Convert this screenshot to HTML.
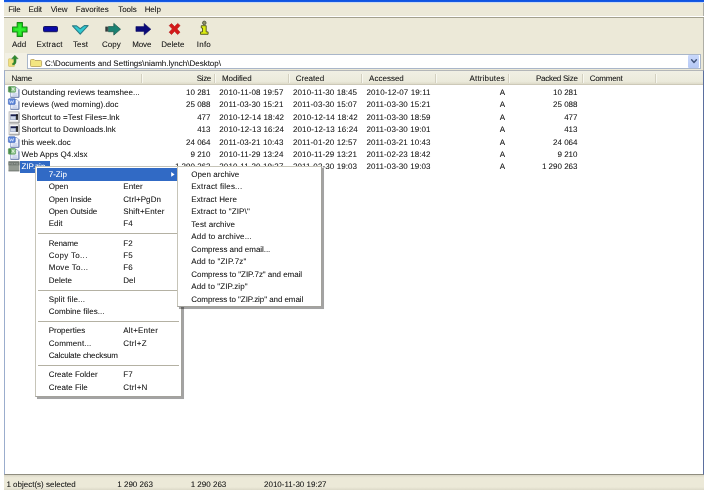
<!DOCTYPE html>
<html><head><meta charset="utf-8"><title>7-Zip File Manager</title>
<style>
html,body{margin:0;padding:0;background:#fff;}
body{width:708px;height:490px;overflow:hidden;position:relative;font-family:"Liberation Sans",Arial,sans-serif;font-size:8px;color:#1a1a1a;text-rendering:geometricPrecision;text-shadow:0 0 0.4px rgba(0,0,0,0.28);}
.abs{position:absolute;}
#win{position:absolute;left:4.3px;top:0;width:699.5px;height:490px;background:#ece9d8;overflow:hidden;}
#layer{position:absolute;left:0;top:0;width:708px;height:490px;will-change:transform;}
#title{left:0;top:0;width:100%;height:3.4px;background:linear-gradient(#0b50e2,#165ae2 50%,#3a74e6 62%,#c9d8f3 82%,#ece9d8);}
#menubar{left:0;top:3.2px;width:100%;height:14px;line-height:14px;white-space:nowrap;}
#menubar span{position:absolute;top:0;}
#sep1{left:0;top:16.2px;width:100%;height:0.9px;background:#fff;}
#sep2{left:0;top:17.1px;width:100%;height:0.9px;background:#a3a08d;}
.tb{position:absolute;top:39.6px;height:10px;line-height:10px;text-align:center;white-space:nowrap;transform:translateX(-50%);}
.ico{position:absolute;overflow:visible;}
#addrbox{left:23.2px;top:53.9px;width:674px;height:15.1px;background:#fff;border:0.8px solid #a9b6c9;box-sizing:border-box;}
#addrtxt{left:40.6px;top:57.7px;height:12px;line-height:12px;white-space:nowrap;}
#ddbtn{left:684.2px;top:55.1px;width:10.9px;height:12.9px;background:linear-gradient(#c9d8fb,#b6c9f5);border-radius:1.2px;}
#list{left:0;top:70px;width:699.5px;height:404.6px;background:#fff;box-sizing:border-box;border-top:0.9px solid #b3b6b8;border-left:1px solid #9badcd;border-right:1px solid #5b6f9e;border-bottom:1.2px solid #8f8d7f;}
#hdr{left:0;top:0;width:697.5px;height:13.5px;background:linear-gradient(#f0efe4,#ebeadb 80%,#dedbca);border-bottom:0.8px solid #cdc9b8;box-sizing:border-box;}
.hd{position:absolute;top:72px;height:13px;line-height:13px;white-space:nowrap;}
.div{position:absolute;top:73.6px;height:9px;width:0.8px;background:#d3d0c0;box-shadow:0.8px 0 0 #fbfaf4;}
.row{position:absolute;left:0;height:12.4px;line-height:12.4px;white-space:nowrap;width:700px;}
.row span{position:absolute;top:0;}
.dt{letter-spacing:0.1px;}
.r{text-align:right;}
#status{left:0;top:474.6px;width:100%;height:15.4px;background:linear-gradient(#d9d6c6,#ece9d8 18%,#ece9d8 80%,#dcd9c8);}
#status span{position:absolute;top:4.2px;height:12px;line-height:12px;white-space:nowrap;}
.menu{position:absolute;background:#fff;border:0.8px solid #c6c4b8;border-right-color:#a3a29c;border-bottom-color:#a3a29c;box-sizing:border-box;box-shadow:1.5px 1.5px 0.5px rgba(0,0,0,0.36);}
.mi{position:absolute;left:0.7px;height:12.38px;line-height:12.38px;white-space:nowrap;}
.mi b{font-weight:normal;position:absolute;left:11.7px;top:0.4px;}
.mi i{font-style:normal;position:absolute;left:86.3px;top:0.4px;}
.ms{position:absolute;left:2.2px;height:0.8px;background:#b4b1a3;}
</style></head><body>
<div id="layer"><div id="win">
<div id="title" class="abs"></div>
<div id="menubar" class="abs"><span style="left:4px;letter-spacing:-0.17px">File</span><span style="left:24.3px;letter-spacing:-0.12px">Edit</span><span style="left:46.5px;letter-spacing:-0.12px">View</span><span style="left:71.5px">Favorites</span><span style="left:114px;letter-spacing:-0.08px">Tools</span><span style="left:140.4px;letter-spacing:-0.1px">Help</span></div>
<div class="abs" style="right:0;top:3px;width:1px;height:67px;background:#aeaea6"></div><div id="sep1" class="abs"></div><div id="sep2" class="abs"></div>

<!-- toolbar icons -->
<svg class="ico" style="left:8px;top:21.5px" width="16" height="15" viewBox="0 0 16 15"><path d="M5.2 0.6h5.2v4.4h4.6v5h-4.6v4.4h-5.2v-4.4h-4.6v-5h4.6z" fill="#21e021" stroke="#158a15" stroke-width="1.1" stroke-linejoin="round"/><path d="M6.6 2.4h2.4v4h3.8v2.2h-3.8v4h-2.4v-4h-3.8v-2.2h3.8z" fill="#3cf23c" opacity=".7"/></svg>
<svg class="ico" style="left:38.8px;top:25.6px" width="15" height="7" viewBox="0 0 15 7"><rect x="0.5" y="0.5" width="14" height="5.2" rx="1" fill="#0a0aa6" stroke="#14145e" stroke-width="1"/></svg>
<svg class="ico" style="left:68.1px;top:25.2px" width="16.6" height="9.8" viewBox="0 0 17 10"><path d="M0.5 0.9h4.2l3.7 2.9l4.2-3.2h3.9l-8.1 8.8z" fill="#2ccad2" stroke="#2f7d86" stroke-width="1.1" stroke-linejoin="round"/></svg>
<svg class="ico" style="left:100.4px;top:22.8px" width="16" height="13" viewBox="0 0 16 13"><rect x="0.3" y="3.6" width="2.6" height="5" fill="#333b3b"/><path d="M3.4 3.6h5.4v-3.2l6.7 5.8l-6.7 5.9v-3.4h-5.4z" fill="#1b8272" stroke="#215c52" stroke-width="0.8" stroke-linejoin="round"/></svg>
<svg class="ico" style="left:131.2px;top:23px" width="16" height="13" viewBox="0 0 16 13"><path d="M0.9 3.6h8.2v-3.2l6.8 5.8l-6.8 5.9v-3.7h-8.2z" fill="#0b0b7a" stroke="#0b0b5a" stroke-width="0.5" stroke-linejoin="round"/></svg>
<svg class="ico" style="left:164px;top:22.9px" width="13" height="12" viewBox="0 0 13 12"><path d="M1.2 2.6l2.3-2l3.1 3l3.1-3.2l2.4 2.2l-3.1 3.3l3 3.3l-2.4 2.3l-3-3.2l-3.1 3.2l-2.4-2.3l3.2-3.3z" fill="#d41a1a" stroke="#b21a1a" stroke-width="0.6" stroke-linejoin="round"/></svg>
<svg class="ico" style="left:196.2px;top:21px" width="9" height="14" viewBox="0 0 9 14"><circle cx="4.3" cy="1.9" r="1.8" fill="#8a8f63" stroke="#4c4c3c" stroke-width="0.8"/><path d="M1.3 4.7h4.9v6.2h1.9v2.4h-7.6v-2.4h2v-3.9h-1.2z" fill="#dcec10" stroke="#4f5418" stroke-width="0.9" stroke-linejoin="round"/></svg>
<div class="tb" style="left:14.8px">Add</div><div class="tb" style="left:45.3px;letter-spacing:0.21px">Extract</div><div class="tb" style="left:76.3px;letter-spacing:0.17px">Test</div><div class="tb" style="left:107px">Copy</div><div class="tb" style="left:137.4px;letter-spacing:-0.12px">Move</div><div class="tb" style="left:168.5px">Delete</div><div class="tb" style="left:199.6px;letter-spacing:0.2px">Info</div>

<!-- address bar -->
<div class="abs" style="left:1.2px;top:52.6px;width:21.6px;height:17px;background:rgba(255,255,255,0.32)"></div><svg class="ico" style="left:3.8px;top:55.4px" width="11" height="12" viewBox="0 0 11 12"><path d="M0.5 4.4q0-0.6 0.6-0.6h1.6l0.7 0.8h2.6q0.6 0 0.6 0.6v5.6q0 0.6-0.6 0.6h-4.9q-0.6 0-0.6-0.6z" fill="#f1e27e" stroke="#cdb95e" stroke-width="0.6"/><path d="M6.8 0.3l3.4 3.5h-2.1v2.6c0 2-1.2 3.4-3.4 3.6l-0.3-1.6c1-0.3 1.5-0.9 1.5-2v-2.6h-2.3z" fill="#2f8a2f" stroke="#256e25" stroke-width="0.4"/></svg>
<div id="addrbox" class="abs"></div>
<svg class="ico" style="left:26.2px;top:58.7px" width="12.4" height="8" viewBox="0 0 12 8" preserveAspectRatio="none"><path d="M0.5 1.4q0-0.9 0.9-0.9h2.6l0.9 1h5.4q0.9 0 0.9 0.9v4.2q0 0.9-0.9 0.9h-8.9q-0.9 0-0.9-0.9z" fill="#f3e681" stroke="#b59e56" stroke-width="0.8"/></svg>
<div id="addrtxt" class="abs">C:\Documents and Settings\niamh.lynch\Desktop\</div>
<div id="ddbtn" class="abs"></div>
<svg class="ico" style="left:687.2px;top:59.2px" width="6" height="5" viewBox="0 0 6 5"><path d="M0.6 0.8l2.4 2.6l2.4-2.6" fill="none" stroke="#44577d" stroke-width="1.5" stroke-linecap="round" stroke-linejoin="round"/></svg>

<!-- list -->
<div id="list" class="abs"><div id="hdr" class="abs"></div></div>
<div class="hd" style="left:7.2px;letter-spacing:-0.25px">Name</div>
<div class="hd r" style="left:140px;width:66.6px;letter-spacing:-0.37px">Size</div>
<div class="hd" style="left:217.7px;letter-spacing:-0.09px">Modified</div>
<div class="hd" style="left:291.4px">Created</div>
<div class="hd" style="left:364.8px">Accessed</div>
<div class="hd r" style="left:440px;width:60.7px;letter-spacing:0.17px">Attributes</div>
<div class="hd r" style="left:510px;width:63.3px;letter-spacing:-0.25px">Packed Size</div>
<div class="hd" style="left:585.4px;letter-spacing:-0.27px">Comment</div>
<div class="div" style="left:136.3px"></div><div class="div" style="left:209.8px"></div><div class="div" style="left:283.3px"></div><div class="div" style="left:356.8px"></div><div class="div" style="left:430.3px"></div><div class="div" style="left:503.8px"></div><div class="div" style="left:577.3px"></div><div class="div" style="left:650.8px"></div>
<div class="row" style="top:86.9px"><svg class="ico" style="left:4.2px;top:-1px" width="12" height="12" viewBox="0 0 12 12"><path d="M2.6 1.5h6.3l2 2v7.8h-8.3z" fill="#eef1fb" stroke="#8f9fc6" stroke-width="0.8"/><path d="M10.9 3.4v7.9h-8.2" fill="none" stroke="#6f80ad" stroke-width="1"/><path d="M4.4 7.9h5M4.4 9.3h5" stroke="#b4c1e2" stroke-width="0.8"/><rect x="0.4" y="0.5" width="7.2" height="5.7" rx="0.7" fill="#8fc78f" stroke="#4f8f4f" stroke-width="0.6"/><rect x="0.7" y="0.9" width="2.6" height="4.9" fill="#4a8c4a"/><path d="M3.8 1.8l2.6 3M6.4 1.8l-2.6 3" stroke="#eaf6e6" stroke-width="0.9"/></svg><span style="left:17.2px;letter-spacing:0.06px">Outstanding reviews teamshee...</span><span class="r" style="left:140px;width:66.2px">10 281</span><span class="dt" style="left:215px">2010-11-08 19:57</span><span class="dt" style="left:288.7px">2010-11-30 18:45</span><span class="dt" style="left:362.2px">2010-12-07 19:11</span><span class="r" style="left:480px;width:20.7px">A</span><span class="r" style="left:510px;width:63.2px">10 281</span></div>
<div class="row" style="top:99.3px"><svg class="ico" style="left:4.2px;top:-1px" width="12" height="12" viewBox="0 0 12 12"><path d="M2.6 1.5h6.3l2 2v7.8h-8.3z" fill="#eef1fb" stroke="#8f9fc6" stroke-width="0.8"/><path d="M10.9 3.4v7.9h-8.2" fill="none" stroke="#6f80ad" stroke-width="1"/><path d="M4.4 7.9h5M4.4 9.3h5" stroke="#b4c1e2" stroke-width="0.8"/><rect x="0.4" y="0.7" width="6.8" height="5.7" rx="0.7" fill="#5a84da" stroke="#3c62b4" stroke-width="0.6"/><path d="M1.5 2.2l1 3l1.1-2.4l1.1 2.4l1-3" fill="none" stroke="#dfe8fb" stroke-width="0.8"/></svg><span style="left:17.2px;letter-spacing:0.06px">reviews (wed morning).doc</span><span class="r" style="left:140px;width:66.2px">25 088</span><span class="dt" style="left:215px">2011-03-30 15:21</span><span class="dt" style="left:288.7px">2011-03-30 15:07</span><span class="dt" style="left:362.2px">2011-03-30 15:21</span><span class="r" style="left:480px;width:20.7px">A</span><span class="r" style="left:510px;width:63.2px">25 088</span></div>
<div class="row" style="top:111.7px"><svg class="ico" style="left:4.2px;top:-1px" width="12" height="13" viewBox="0 0 12 13"><rect x="1" y="0.8" width="10" height="11" fill="#e6e6e6" stroke="#b2b2b2" stroke-width="0.7"/><path d="M11.1 1.6v10.3h-9.6" fill="none" stroke="#8d8d8d" stroke-width="0.8"/><rect x="2.2" y="2.4" width="7.8" height="7.6" fill="#fff"/><rect x="2.5" y="3.3" width="7.4" height="1.8" fill="#1c2250"/><rect x="8.1" y="3.3" width="1.8" height="5.6" fill="#1c1c1c"/><rect x="2.7" y="5.6" width="5" height="3.2" fill="#cfd7e8" stroke="#8291b4" stroke-width="0.6"/></svg><span style="left:17.2px;letter-spacing:0.06px">Shortcut to =Test Files=.lnk</span><span class="r" style="left:140px;width:66.2px">477</span><span class="dt" style="left:215px">2010-12-14 18:42</span><span class="dt" style="left:288.7px">2010-12-14 18:42</span><span class="dt" style="left:362.2px">2011-03-30 18:59</span><span class="r" style="left:480px;width:20.7px">A</span><span class="r" style="left:510px;width:63.2px">477</span></div>
<div class="row" style="top:124.1px"><svg class="ico" style="left:4.2px;top:-1px" width="12" height="13" viewBox="0 0 12 13"><rect x="1" y="0.8" width="10" height="11" fill="#e6e6e6" stroke="#b2b2b2" stroke-width="0.7"/><path d="M11.1 1.6v10.3h-9.6" fill="none" stroke="#8d8d8d" stroke-width="0.8"/><rect x="2.2" y="2.4" width="7.8" height="7.6" fill="#fff"/><rect x="2.5" y="3.3" width="7.4" height="1.8" fill="#1c2250"/><rect x="8.1" y="3.3" width="1.8" height="5.6" fill="#1c1c1c"/><rect x="2.7" y="5.6" width="5" height="3.2" fill="#cfd7e8" stroke="#8291b4" stroke-width="0.6"/></svg><span style="left:17.2px;letter-spacing:0.06px">Shortcut to Downloads.lnk</span><span class="r" style="left:140px;width:66.2px">413</span><span class="dt" style="left:215px">2010-12-13 16:24</span><span class="dt" style="left:288.7px">2010-12-13 16:24</span><span class="dt" style="left:362.2px">2011-03-30 19:01</span><span class="r" style="left:480px;width:20.7px">A</span><span class="r" style="left:510px;width:63.2px">413</span></div>
<div class="row" style="top:136.5px"><svg class="ico" style="left:4.2px;top:-1px" width="12" height="12" viewBox="0 0 12 12"><path d="M2.6 1.5h6.3l2 2v7.8h-8.3z" fill="#eef1fb" stroke="#8f9fc6" stroke-width="0.8"/><path d="M10.9 3.4v7.9h-8.2" fill="none" stroke="#6f80ad" stroke-width="1"/><path d="M4.4 7.9h5M4.4 9.3h5" stroke="#b4c1e2" stroke-width="0.8"/><rect x="0.4" y="0.7" width="6.8" height="5.7" rx="0.7" fill="#5a84da" stroke="#3c62b4" stroke-width="0.6"/><path d="M1.5 2.2l1 3l1.1-2.4l1.1 2.4l1-3" fill="none" stroke="#dfe8fb" stroke-width="0.8"/></svg><span style="left:17.2px;letter-spacing:0.06px">this week.doc</span><span class="r" style="left:140px;width:66.2px">24 064</span><span class="dt" style="left:215px">2011-03-21 10:43</span><span class="dt" style="left:288.7px">2011-01-20 12:57</span><span class="dt" style="left:362.2px">2011-03-21 10:43</span><span class="r" style="left:480px;width:20.7px">A</span><span class="r" style="left:510px;width:63.2px">24 064</span></div>
<div class="row" style="top:148.9px"><svg class="ico" style="left:4.2px;top:-1px" width="12" height="12" viewBox="0 0 12 12"><path d="M2.6 1.5h6.3l2 2v7.8h-8.3z" fill="#eef1fb" stroke="#8f9fc6" stroke-width="0.8"/><path d="M10.9 3.4v7.9h-8.2" fill="none" stroke="#6f80ad" stroke-width="1"/><path d="M4.4 7.9h5M4.4 9.3h5" stroke="#b4c1e2" stroke-width="0.8"/><rect x="0.4" y="0.5" width="7.2" height="5.7" rx="0.7" fill="#8fc78f" stroke="#4f8f4f" stroke-width="0.6"/><rect x="0.7" y="0.9" width="2.6" height="4.9" fill="#4a8c4a"/><path d="M3.8 1.8l2.6 3M6.4 1.8l-2.6 3" stroke="#eaf6e6" stroke-width="0.9"/></svg><span style="left:17.2px;letter-spacing:0.06px">Web Apps Q4.xlsx</span><span class="r" style="left:140px;width:66.2px">9 210</span><span class="dt" style="left:215px">2010-11-29 13:24</span><span class="dt" style="left:288.7px">2010-11-29 13:21</span><span class="dt" style="left:362.2px">2011-02-23 18:42</span><span class="r" style="left:480px;width:20.7px">A</span><span class="r" style="left:510px;width:63.2px">9 210</span></div>
<div class="row" style="top:161.3px"><svg class="ico" style="left:4.2px;top:-0.2px" width="12" height="11" viewBox="0 0 12 11"><rect x="0.5" y="0.4" width="10.9" height="9.6" fill="#939a92"/><rect x="0.5" y="0.4" width="10.9" height="4" fill="#727a74"/><path d="M1.4 2.6h1.2M3.4 2.9h1.6M6 2.6h1.4M8.2 2.9h1.8" stroke="#b9beb8" stroke-width="0.6"/><path d="M0.5 10h10.9" stroke="#5c625d" stroke-width="0.7"/></svg><span style="left:16.2px;width:29.4px;height:11.2px;top:0.2px;background:#316ac5"></span><span style="left:17.2px;color:#fff;text-shadow:0 0 0.4px rgba(255,255,255,0.3)">ZIP.zip</span><span class="r" style="left:140px;width:66.2px">1 290 263</span><span class="dt" style="left:215px">2010-11-30 19:27</span><span class="dt" style="left:288.7px">2011-03-30 19:03</span><span class="dt" style="left:362.2px">2011-03-30 19:03</span><span class="r" style="left:480px;width:20.7px">A</span><span class="r" style="left:510px;width:63.2px">1 290 263</span></div>
<div id="status" class="abs"><span style="left:2.1px">1 object(s) selected</span><span style="left:113px">1 290 263</span><span style="left:186.4px">1 290 263</span><span style="left:259.7px">2010-11-30 19:27</span></div>
<div class="menu" id="ctx" style="left:31.0px;top:166.3px;width:146.3px;height:230.4px">
<div class="mi" style="top:1.20px;width:143.3px;background:#316ac5;color:#fff;text-shadow:0 0 0.4px rgba(255,255,255,0.3);"><b style="letter-spacing:0.033px">7-Zip</b></div>
<div class="mi" style="top:13.60px;width:143.3px;"><b>Open</b><i style="letter-spacing:0.095px">Enter</i></div>
<div class="mi" style="top:26.00px;width:143.3px;"><b>Open Inside</b><i style="letter-spacing:0.064px">Ctrl+PgDn</i></div>
<div class="mi" style="top:38.40px;width:143.3px;"><b style="letter-spacing:-0.065px">Open Outside</b><i style="letter-spacing:0.135px">Shift+Enter</i></div>
<div class="mi" style="top:50.80px;width:143.3px;"><b style="letter-spacing:-0.024px">Edit</b><i>F4</i></div>
<div class="ms" style="top:66.15px;width:140.3px"></div>
<div class="mi" style="top:69.90px;width:143.3px;"><b style="letter-spacing:-0.158px">Rename</b><i>F2</i></div>
<div class="mi" style="top:82.30px;width:143.3px;"><b style="letter-spacing:0.312px">Copy To...</b><i>F5</i></div>
<div class="mi" style="top:94.70px;width:143.3px;"><b style="letter-spacing:0.293px">Move To...</b><i>F6</i></div>
<div class="mi" style="top:107.10px;width:143.3px;"><b style="letter-spacing:0.046px">Delete</b><i>Del</i></div>
<div class="ms" style="top:122.45px;width:140.3px"></div>
<div class="mi" style="top:126.20px;width:143.3px;"><b style="letter-spacing:0.139px">Split file...</b></div>
<div class="mi" style="top:138.60px;width:143.3px;"><b style="letter-spacing:0.041px">Combine files...</b></div>
<div class="ms" style="top:153.95px;width:140.3px"></div>
<div class="mi" style="top:157.70px;width:143.3px;"><b>Properties</b><i style="letter-spacing:0.184px">Alt+Enter</i></div>
<div class="mi" style="top:170.10px;width:143.3px;"><b style="letter-spacing:0.136px">Comment...</b><i style="letter-spacing:0.250px">Ctrl+Z</i></div>
<div class="mi" style="top:182.50px;width:143.3px;"><b style="letter-spacing:-0.133px">Calculate checksum</b></div>
<div class="ms" style="top:197.85px;width:140.3px"></div>
<div class="mi" style="top:201.60px;width:143.3px;"><b>Create Folder</b><i>F7</i></div>
<div class="mi" style="top:214.00px;width:143.3px;"><b>Create File</b><i style="letter-spacing:0.235px">Ctrl+N</i></div>
<svg class="ico" style="left:134.8px;top:5.2px" width="4" height="5" viewBox="0 0 4 5"><path d="M0.2 0l3.4 2.4l-3.4 2.4z" fill="#fff"/></svg>
</div>
<div class="menu" id="sub" style="left:172.9px;top:165.9px;width:144.4px;height:141.5px">
<div class="mi" style="top:1.30px;width:139.6px"><b style="left:12.4px;letter-spacing:0.034px">Open archive</b></div>
<div class="mi" style="top:13.80px;width:139.6px"><b style="left:12.4px;letter-spacing:0.193px">Extract files...</b></div>
<div class="mi" style="top:26.30px;width:139.6px"><b style="left:12.4px;letter-spacing:0.103px">Extract Here</b></div>
<div class="mi" style="top:38.80px;width:139.6px"><b style="left:12.4px;letter-spacing:0.132px">Extract to &quot;ZIP\&quot;</b></div>
<div class="mi" style="top:51.30px;width:139.6px"><b style="left:12.4px;letter-spacing:0.093px">Test archive</b></div>
<div class="mi" style="top:63.80px;width:139.6px"><b style="left:12.4px;letter-spacing:0.164px">Add to archive...</b></div>
<div class="mi" style="top:76.30px;width:139.6px"><b style="left:12.4px;letter-spacing:-0.049px">Compress and email...</b></div>
<div class="mi" style="top:88.80px;width:139.6px"><b style="left:12.4px;letter-spacing:0.132px">Add to &quot;ZIP.7z&quot;</b></div>
<div class="mi" style="top:101.30px;width:139.6px"><b style="left:12.4px;letter-spacing:-0.048px">Compress to &quot;ZIP.7z&quot; and email</b></div>
<div class="mi" style="top:113.80px;width:139.6px"><b style="left:12.4px;letter-spacing:0.093px">Add to &quot;ZIP.zip&quot;</b></div>
<div class="mi" style="top:126.30px;width:139.6px"><b style="left:12.4px;letter-spacing:-0.066px">Compress to &quot;ZIP.zip&quot; and email</b></div>
</div>
</div></div></body></html>
